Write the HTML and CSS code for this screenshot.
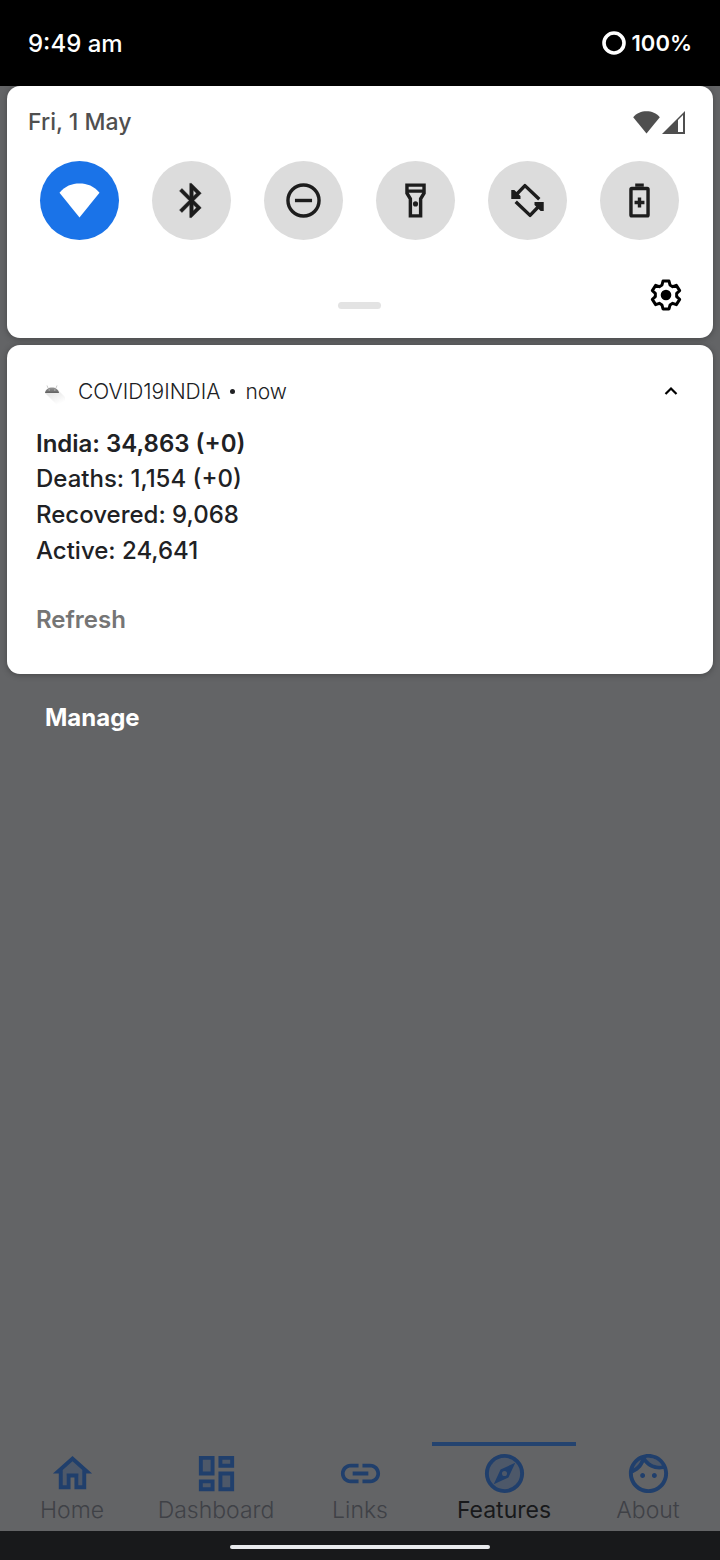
FILE: index.html
```html
<!DOCTYPE html>
<html lang="en">
<head>
<meta charset="utf-8">
<meta name="viewport" content="width=device-width, initial-scale=1">
<title>Notifications</title>
<link rel="stylesheet" href="styles.css">
</head>
<body>
<div class="screen">
  <header class="status">
    <time class="clock">9:49 am</time>
    <div class="battery">
      <svg class="battery-ring" viewBox="0 0 24 24" aria-hidden="true"><circle cx="12" cy="12" r="10" fill="none" stroke="#fff" stroke-width="3.6"/></svg>
      <span>100%</span>
    </div>
  </header>

  <main class="shade">
    <section class="card quick">
      <div class="quick-top">
        <span class="date">Fri, 1 May</span>
        <div class="signals">
          <svg class="sig-wifi" viewBox="0 0 27 23" aria-hidden="true"><path d="M13.5 22.6.2 6.2C3.6 2 8.4.2 13.5.2S23.4 2 26.8 6.2z" fill="#4f4f4f"/></svg>
          <svg class="sig-cell" viewBox="0 0 23 23" aria-hidden="true"><path d="M0 23 23 0v23zM16 9v12h5V4z" fill="#4f4f4f" fill-rule="evenodd"/></svg>
        </div>
      </div>
      <div class="tiles">
        <button class="tile tile-on" aria-label="Wi-Fi"><svg class="tile-icon" viewBox="0 0 24 24"><path d="M12 22 .3 7.4C3.4 3.5 7.6 2 12 2s8.600 1.500 11.700 5.400z" fill="#fff"/></svg></button>
        <button class="tile" aria-label="Bluetooth"><svg class="tile-icon" viewBox="0 0 24 24"><path d="M17.710 7.710L12 2h-1v7.590L6.410 5 5 6.410 10.590 12 5 17.590 6.410 19 11 14.410V22h1l5.710-5.710-4.300-4.290 4.300-4.290zM13 5.830l1.880 1.880L13 9.590V5.830zm1.880 10.460L13 18.170v-3.760l1.880 1.880z" fill="#1d1d1d" stroke="#1d1d1d" stroke-width=".3"/></svg></button>
        <button class="tile" aria-label="Do not disturb"><svg class="tile-icon line" viewBox="0 0 24 24"><circle cx="12" cy="12" r="9.100"/><path d="M7 12h10"/></svg></button>
        <button class="tile" aria-label="Torch"><svg class="tile-icon line" viewBox="0 0 24 24"><path d="M7 3h10v4.700l-2 3.300v10H9V11L7 7.700zM7 6.500h10"/><circle cx="12" cy="14" r="1.500" fill="#1d1d1d" stroke="none"/></svg></button>
        <button class="tile" aria-label="Auto-rotate"><svg class="tile-icon line" viewBox="0 0 24 24"><path stroke-linejoin="round" d="M4.500 9.500l6-6.200 8.400 8M19.500 14.500l-6 6.200-8.400-8"/><path fill="#1d1d1d" stroke="none" d="M2.500 5.800h1.800l3.600 3.600v1.700H2.500zM21.500 18.200h-1.800l-3.600-3.600v-1.700h5.400z"/></svg></button>
        <button class="tile" aria-label="Battery saver"><svg class="tile-icon line" viewBox="0 0 24 24"><rect x="7" y="5" width="10" height="16" rx=".5"/><path d="M9.500 3h5M12 10.300v5.800M9.100 13.200h5.800"/></svg></button>
      </div>
      <div class="quick-foot">
        <span class="handle"></span>
        <button class="gear" aria-label="Settings"><svg class="gear-icon" viewBox="-48 -48 96 96"><path fill="none" stroke="#000" stroke-width="9" stroke-linejoin="round" d="M-9-42H9L12-30 20-25 31-29 41-13 32-5V5L41 13 31 29 20 25 12 30 9 42H-9L-12 30-20 25-31 29-41 13-32 5V-5L-41-13-31-29-20-25-12-30z"/><circle r="16"/></svg></button>
      </div>
    </section>

    <article class="card note">
      <div class="note-head">
        <svg class="app-icon" viewBox="0 0 28 28" aria-hidden="true">
          <defs>
            <linearGradient id="dome" x1="0" y1="0" x2="0" y2="1"><stop offset="0" stop-color="#999"/><stop offset="1" stop-color="#606060"/></linearGradient>
            <linearGradient id="cast" x1="0" y1="0" x2=".6" y2="1"><stop offset="0" stop-color="#ddd"/><stop offset="1" stop-color="#fff"/></linearGradient>
          </defs>
          <path d="M5 16 18 13l7 7v8h-8z" fill="url(#cast)"/>
          <path d="M7 8.500 8 11M17 8.500 16 11" stroke="#ccc"/>
          <path d="M5 16C5.500 8.500 18.500 8.500 19 16z" fill="url(#dome)"/>
          <path d="M8.500 13H10M14 13h1.500" stroke="#bbb"/>
        </svg>
        <span class="app-name">COVID19INDIA</span>
        <span class="dot"></span>
        <span>now</span>
        <button class="collapse" aria-label="Collapse"><svg class="chevron" viewBox="0 0 14 10"><path d="M1.500 8 7 2.500 12.500 8" fill="none" stroke="#000" stroke-width="2.200"/></svg></button>
      </div>
      <h1 class="note-title">India: 34,863 (+0)</h1>
      <p class="note-line">Deaths: 1,154 (+0)</p>
      <p class="note-line">Recovered: 9,068</p>
      <p class="note-line">Active: 24,641</p>
      <button class="refresh">Refresh</button>
    </article>

    <button class="manage">Manage</button>
  </main>

  <nav class="tabs">
    <a class="tab" href="#home"><svg class="tab-icon" viewBox="0 0 24 24"><path class="tint" d="m12 5-6 5.400V19h3v-6h6v6h3v-8.600z"/><path fill-rule="evenodd" d="M12 3 2 12h3v8h6v-6h2v6h6v-8h3zm5 15h-2v-6H9v6H7v-7.810l5-4.500 5 4.500z"/></svg>Home</a>
    <a class="tab" href="#dashboard"><svg class="tab-icon" viewBox="0 0 24 24"><path class="tint" d="M4 4h6v8H4zM14 4h6v4h-6zM14 12h6v8h-6zM4 16h6v4H4z"/><path fill-rule="evenodd" d="M3 3h8v10H3zm2 2v6h4V5zM13 3h8v6h-8zm2 2v2h4V5zM13 11h8v10h-8zm2 2v6h4v-6zM3 15h8v6H3zm2 2v2h4v-2z"/></svg>Dashboard</a>
    <a class="tab" href="#links"><svg class="tab-icon" viewBox="0 0 24 24"><path d="M3.900 12c0-1.710 1.390-3.100 3.100-3.100h4V7H7c-2.760 0-5 2.240-5 5s2.240 5 5 5h4v-1.900H7c-1.710 0-3.100-1.390-3.100-3.100zM8 13h8v-2H8v2zm9-6h-4v1.900h4c1.710 0 3.100 1.390 3.100 3.100s-1.390 3.100-3.100 3.100h-4V17h4c2.760 0 5-2.240 5-5s-2.240-5-5-5z"/></svg>Links</a>
    <a class="tab tab-on" href="#features" aria-current="page"><svg class="tab-icon" viewBox="0 0 24 24"><circle class="tint" cx="12" cy="12" r="9"/><path fill-rule="evenodd" d="M12 2a10 10 0 1 0 0 20 10 10 0 0 0 0-20zm0 18a8 8 0 1 1 0-16 8 8 0 0 1 0 16zM6.500 17.500l7.510-3.490L17.500 6.500 9.990 9.990zM12 10.700a1.300 1.300 0 1 1 0 2.600 1.300 1.300 0 0 1 0-2.600z"/></svg>Features</a>
    <a class="tab" href="#about"><svg class="tab-icon" viewBox="0 0 24 24"><path class="tint" d="M10.660 4.120C12.060 6.440 14.600 8 17.500 8l1.340-.12C17.440 5.560 14.900 4 12 4zM4.420 9.470c1.710-.97 3.030-2.550 3.660-4.440C6.370 6 5.050 7.580 4.420 9.470z"/><path d="M10.250 13c0 .69-.56 1.250-1.250 1.250S7.750 13.690 7.750 13s.56-1.250 1.250-1.250 1.250.56 1.250 1.250zM15 11.750c-.69 0-1.250.56-1.250 1.250s.56 1.250 1.250 1.250 1.250-.56 1.250-1.250-.56-1.250-1.250-1.250zm7 .25c0 5.520-4.480 10-10 10S2 17.520 2 12 6.480 2 12 2s10 4.480 10 10zM10.660 4.120C12.060 6.440 14.600 8 17.500 8c.46 0 .91-.05 1.340-.12C17.440 5.560 14.900 4 12 4c-.46 0-.91.05-1.340.12zM4.420 9.470c1.710-.97 3.030-2.550 3.660-4.440C6.370 6 5.050 7.580 4.420 9.470zM20 12c0-.78-.12-1.530-.33-2.240-.7.15-1.420.24-2.170.24-3.130 0-5.920-1.440-7.760-3.690C8.690 8.870 6.600 10.880 4 11.860c.01.04 0 .09 0 .14 0 4.410 3.590 8 8 8s8-3.590 8-8z"/></svg>About</a>
  </nav>
  <footer class="system"><span class="pill"></span></footer>
</div>
</body>
</html>
```
FILE: styles.css
```css
* { box-sizing: border-box; }
body {
  margin: 0;
  background: #636466;
  font-family: Inter, "Noto Sans", sans-serif;
  font-size: 24px;
  color: #202124;
}
button {
  margin: 0;
  padding: 0;
  border: 0;
  background: none;
  font: inherit;
  color: inherit;
  cursor: pointer;
}
svg { display: block; flex: none; }
.screen {
  display: flex;
  flex-direction: column;
  min-height: 100vh;
}
.status {
  display: flex;
  align-items: center;
  justify-content: space-between;
  height: 86px;
  padding: 0 28px;
  background: #000;
  color: #fff;
  font-weight: 500;
}
.battery {
  display: flex;
  align-items: center;
  gap: 6px;
  font-size: 22px;
  font-weight: 600;
}
.battery-ring { width: 24px; height: 24px; }
.shade {
  display: flex;
  flex-direction: column;
  align-items: flex-start;
  gap: 7px;
  padding: 0 7px;
}
.card {
  width: 100%;
  border-radius: 13px;
  background: #fff;
  box-shadow: 0 1px 6px rgba(0, 0, 0, .3);
}
.quick { padding: 20px 28px 24px 21px; }
.quick-top {
  display: flex;
  align-items: center;
  justify-content: space-between;
  height: 32px;
}
.date {
  font-size: 23px;
  font-weight: 500;
  color: #4f4f4f;
}
.signals { display: flex; gap: 2px; }
.sig-wifi { width: 27px; height: 23px; }
.sig-cell { width: 23px; height: 23px; }
.tiles {
  display: flex;
  justify-content: space-between;
  margin-top: 23px;
  padding: 0 6px 0 12px;
}
.tile {
  display: grid;
  place-items: center;
  width: 79px;
  height: 79px;
  border-radius: 50%;
  background: #dcdcdc;
}
.tile-on { background: #1a73e8; }
.tile-icon { width: 41px; height: 41px; }
.line {
  fill: none;
  stroke: #1d1d1d;
  stroke-width: 2;
}
.quick-foot {
  display: grid;
  grid-template-columns: 1fr auto 1fr;
  align-items: end;
  margin-top: 36px;
  padding-left: 6px;
}
.handle {
  grid-column: 2;
  width: 43px;
  height: 7px;
  margin-bottom: 5px;
  border-radius: 4px;
  background: #e3e3e3;
}
.gear {
  justify-self: end;
  padding: 3px;
}
.gear-icon { width: 32px; height: 32px; }
.note {
  display: flex;
  flex-direction: column;
  align-items: flex-start;
  padding: 30px 28px 36px 29px;
}
.note-head {
  display: flex;
  align-items: center;
  width: 100%;
  height: 32px;
  margin-bottom: 20px;
  padding-left: 4px;
  font-size: 21px;
  font-weight: 300;
}
.app-icon { width: 28px; height: 28px; margin-right: 10px; }
.dot {
  width: 5px;
  height: 5px;
  margin: 0 10px;
  border-radius: 50%;
  background: #202124;
}
.collapse { margin: 0 7px 0 auto; }
.chevron { width: 14px; height: 10px; }
.note-title {
  margin: 0;
  font-size: 24px;
  font-weight: 600;
  line-height: 34px;
}
.note-line {
  margin: 0;
  font-weight: 500;
  line-height: 36px;
}
.refresh {
  margin-top: 33px;
  line-height: 36px;
  font-weight: 600;
  color: #757575;
}
.manage {
  margin: 19px 0 0 38px;
  line-height: 36px;
  font-weight: 700;
  color: #fff;
}
.tabs {
  display: grid;
  grid-template-columns: repeat(5, 1fr);
  margin-top: auto;
}
.tab {
  display: flex;
  flex-direction: column;
  align-items: center;
  padding: 4px 0 8px;
  border-top: 4px solid transparent;
  font-size: 23px;
  font-weight: 300;
  line-height: 26px;
  color: #3f4146;
  text-decoration: none;
}
.tab-on {
  border-top-color: #24436f;
  font-weight: 400;
  color: #18191b;
}
.tab-icon {
  width: 47px;
  height: 47px;
  fill: #203f6c;
}
.tint { fill: #4d5869; }
.system {
  display: flex;
  justify-content: center;
  padding: 14px 0 11px;
  background: #18191b;
}
.pill {
  width: 260px;
  height: 4px;
  border-radius: 2px;
  background: #e8eaed;
}
```
